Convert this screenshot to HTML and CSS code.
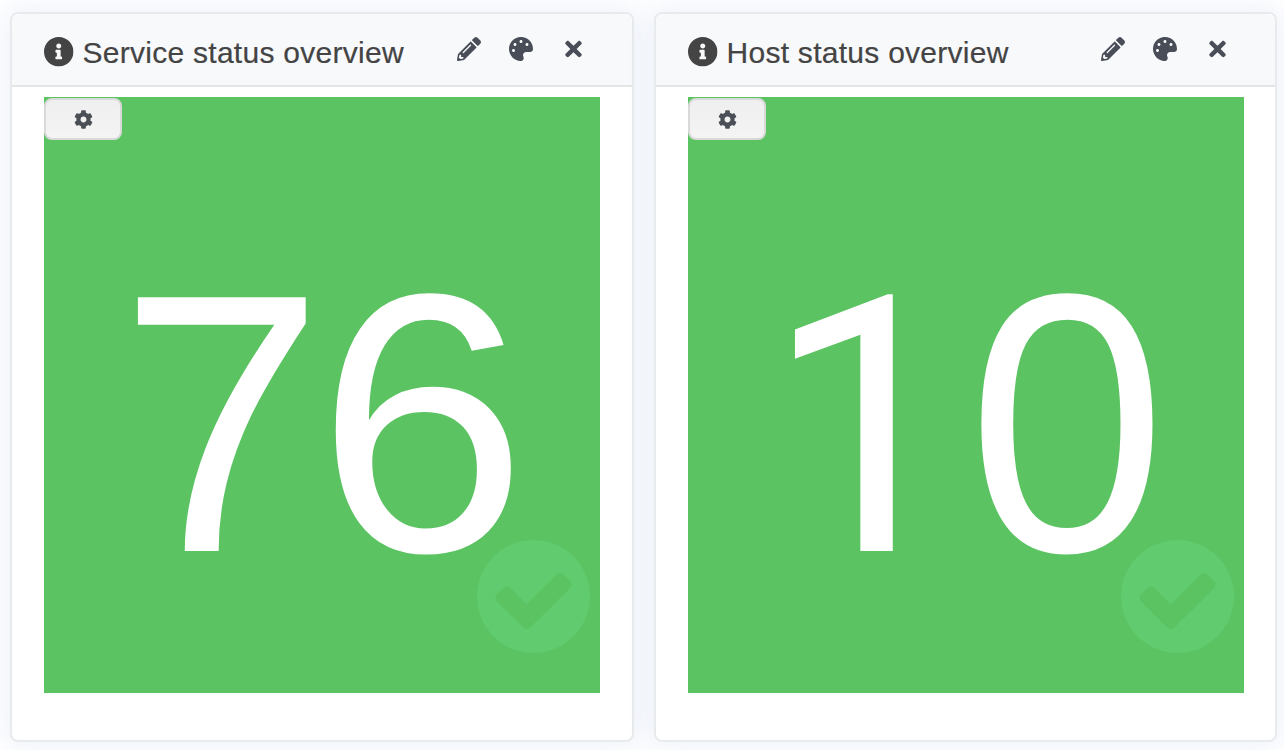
FILE: index.html
```html
<!DOCTYPE html>
<html lang="en">
<head>
<meta charset="utf-8">
<title>Status overview</title>
<link rel="stylesheet" href="styles.css">
</head>
<body>
<svg class="sprite" aria-hidden="true">
  <symbol id="info" viewBox="8 8 496 496"><path d="M256 8C119.043 8 8 119.083 8 256c0 136.997 111.043 248 248 248s248-111.003 248-248C504 119.083 392.957 8 256 8zm0 110c23.196 0 42 18.804 42 42s-18.804 42-42 42-42-18.804-42-42 18.804-42 42-42zm56 254c0 6.627-5.373 12-12 12h-88c-6.627 0-12-5.373-12-12v-24c0-6.627 5.373-12 12-12h12v-64h-12c-6.627 0-12-5.373-12-12v-24c0-6.627 5.373-12 12-12h64c6.627 0 12 5.373 12 12v100h12c6.627 0 12 5.373 12 12v24z"/></symbol>
  <symbol id="pencil" viewBox="0 0 512 512"><path d="M497.9 142.1l-46.1 46.1c-4.7 4.7-12.3 4.7-17 0l-111-111c-4.7-4.7-4.7-12.3 0-17l46.1-46.1c18.7-18.7 49.1-18.7 67.9 0l60.1 60.1c18.8 18.7 18.8 49.1 0 67.9zM284.2 99.8L21.6 362.4.4 483.9c-2.9 16.4 11.4 30.6 27.8 27.8l121.5-21.3 262.6-262.6c4.7-4.7 4.7-12.3 0-17l-111-111c-4.8-4.7-12.4-4.7-17.1 0zM124.1 339.9c-5.5-5.5-5.5-14.3 0-19.8l154-154c5.5-5.5 14.3-5.5 19.8 0s5.5 14.3 0 19.8l-154 154c-5.5 5.5-14.3 5.5-19.8 0zM88 424h48v36.3l-64.5 11.3-31.1-31.1L51.7 376H88v48z"/></symbol>
  <symbol id="palette" viewBox="0 0 512 512"><path d="M204.3 5C104.9 24.4 24.8 104.3 5.2 203.4c-37 187 131.7 326.4 258.8 306.7 41.2-6.4 61.4-54.6 42.5-91.7-23.1-45.4 9.9-98.4 60.9-98.4h79.7c35.8 0 64.8-29.6 64.9-65.3C511.5 97.1 368.1-26.9 204.3 5zM96 320c-17.7 0-32-14.3-32-32s14.3-32 32-32 32 14.3 32 32-14.3 32-32 32zm32-128c-17.7 0-32-14.3-32-32s14.3-32 32-32 32 14.3 32 32-14.3 32-32 32zm128-64c-17.7 0-32-14.3-32-32s14.3-32 32-32 32 14.3 32 32-14.3 32-32 32zm128 64c-17.7 0-32-14.3-32-32s14.3-32 32-32 32 14.3 32 32-14.3 32-32 32z"/></symbol>
  <symbol id="times" viewBox="0 0 352 512"><path d="M242.72 256l100.07-100.07c12.28-12.28 12.28-32.19 0-44.48l-22.24-22.24c-12.28-12.28-32.19-12.28-44.48 0L176 189.28 75.93 89.21c-12.28-12.28-32.19-12.28-44.48 0L9.21 111.45c-12.28 12.28-12.28 32.19 0 44.48L109.28 256 9.21 356.07c-12.28 12.28-12.28 32.19 0 44.48l22.24 22.24c12.28 12.28 32.2 12.28 44.48 0L176 322.72l100.07 100.07c12.28 12.28 32.2 12.28 44.48 0l22.24-22.24c12.28-12.28 12.28-32.19 0-44.48L242.72 256z"/></symbol>
  <symbol id="cog" viewBox="0 0 512 512"><path d="M487.4 315.7l-42.6-24.6c4.3-23.2 4.3-47 0-70.2l42.6-24.6c4.9-2.8 7.1-8.6 5.5-14-11.1-35.6-30-67.8-54.7-94.6-3.8-4.1-10-5.1-14.8-2.3L380.8 110c-17.9-15.4-38.5-27.3-60.8-35.1V25.8c0-5.6-3.9-10.5-9.4-11.7-36.7-8.2-74.3-7.8-109.2 0-5.5 1.2-9.4 6.1-9.4 11.7V75c-22.2 7.9-42.8 19.8-60.8 35.1L88.7 85.5c-4.9-2.8-11-1.9-14.8 2.3-24.7 26.7-43.6 58.9-54.7 94.6-1.7 5.4.6 11.2 5.5 14L67.3 221c-4.3 23.2-4.3 47 0 70.2l-42.6 24.6c-4.9 2.8-7.1 8.6-5.5 14 11.1 35.6 30 67.8 54.7 94.6 3.8 4.1 10 5.1 14.8 2.3l42.6-24.6c17.9 15.4 38.5 27.3 60.8 35.1v49.2c0 5.6 3.9 10.5 9.4 11.7 36.7 8.2 74.3 7.8 109.2 0 5.5-1.2 9.4-6.1 9.4-11.7v-49.2c22.2-7.9 42.8-19.8 60.8-35.1l42.6 24.6c4.9 2.8 11 1.9 14.8-2.3 24.7-26.7 43.6-58.9 54.7-94.6 1.5-5.5-.7-11.3-5.6-14.1zM256 336c-44.1 0-80-35.9-80-80s35.9-80 80-80 80 35.9 80 80-35.9 80-80 80z"/></symbol>
  <symbol id="check" viewBox="128 128 1536 1536"><path d="M1412 734q0-28-18-46l-91-90q-19-19-45-19t-45 19l-408 407-226-226q-19-19-45-19t-45 19l-91 90q-18 18-18 46 0 27 18 45l362 362q19 19 45 19 27 0 46-19l543-543q18-18 18-45zm252 162q0 209-103 385.5t-279.5 279.5-385.5 103-385.5-103-279.5-279.5-103-385.5 103-385.5 279.5-279.5 385.5-103 385.5 103 279.5 279.5 103 385.5z"/></symbol>
</svg>
<main class="dashboard">
  <section class="widget">
    <header class="widget-header">
      <svg class="info-icon"><use href="#info"/></svg>
      <h2 class="title">Service status overview</h2>
      <nav class="tools">
        <svg class="tool"><use href="#pencil"/></svg>
        <svg class="tool"><use href="#palette"/></svg>
        <svg class="tool close"><use href="#times"/></svg>
      </nav>
    </header>
    <div class="tile">
      <button class="settings" aria-label="Settings"><svg class="cog"><use href="#cog"/></svg></button>
      <svg class="count" viewBox="0 0 556 596"><text x="75" y="454">7</text><text transform="translate(272.5 454) scale(1.028 1)">6</text></svg>
      <svg class="state"><use href="#check"/></svg>
    </div>
  </section>
  <section class="widget">
    <header class="widget-header">
      <svg class="info-icon"><use href="#info"/></svg>
      <h2 class="title">Host status overview</h2>
      <nav class="tools">
        <svg class="tool"><use href="#pencil"/></svg>
        <svg class="tool"><use href="#palette"/></svg>
        <svg class="tool close"><use href="#times"/></svg>
      </nav>
    </header>
    <div class="tile">
      <button class="settings" aria-label="Settings"><svg class="cog"><use href="#cog"/></svg></button>
      <svg class="count" viewBox="0 0 556 596"><text class="one" x="77" y="454">1</text><text transform="translate(279.4 454) scale(.97 1)">0</text></svg>
      <svg class="state"><use href="#check"/></svg>
    </div>
  </section>
</main>
</body>
</html>
```
FILE: styles.css
```css
* { box-sizing: border-box; }
body { margin: 0; height: 750px; overflow: hidden; background: #fff; font-family: "Liberation Sans", Arial, sans-serif; }
svg { display: block; fill: currentColor; }
.sprite { position: absolute; width: 0; height: 0; }
.dashboard { display: grid; grid-template-columns: 624px 623px; gap: 20px; padding: 12px 0 0 10px; }
.widget { height: 730px; background: #fff; border: 2px solid #e9eaeb; border-radius: 8px; box-shadow: 0 0 26px 4px rgba(130, 155, 210, .14); }
.widget-header { display: flex; align-items: flex-start; height: 73px; padding: 23px 0 0 32px; background: #f8f9fb; border-bottom: 2px solid #e5e5e5; border-radius: 6px 6px 0 0; color: #444; }
.info-icon { width: 29.5px; height: 29.5px; flex: none; }
.title { width: 374.5px; margin: -2px 0 0 9px; font-size: 30px; line-height: 36px; font-weight: 400; letter-spacing: .27px; white-space: nowrap; -webkit-text-stroke: .2px #444; }
.tools { display: flex; gap: 28px; color: #484d57; }
.tool { width: 24px; height: 24px; flex: none; }
.close { width: 17px; margin-left: 4px; }
.tile { position: relative; width: 556px; height: 596px; margin: 10px 0 0 32px; background: #5bc362; }
.settings { position: absolute; left: 0; top: 1px; display: flex; align-items: center; justify-content: center; width: 78px; height: 42px; padding: 0; border: 2px solid #d9d9d9; border-radius: 8px; background: linear-gradient(#efefef, #f4f4f4); color: #4b5057; }
.cog { width: 19px; height: 19px; }
.count { width: 556px; height: 596px; color: #fff; font-size: 369px; }
.one { font-family: Roboto, sans-serif; font-size: 359px; }
.state { position: absolute; right: 10.3px; bottom: 40px; width: 113px; height: 113px; color: #60cb6f; }
```
